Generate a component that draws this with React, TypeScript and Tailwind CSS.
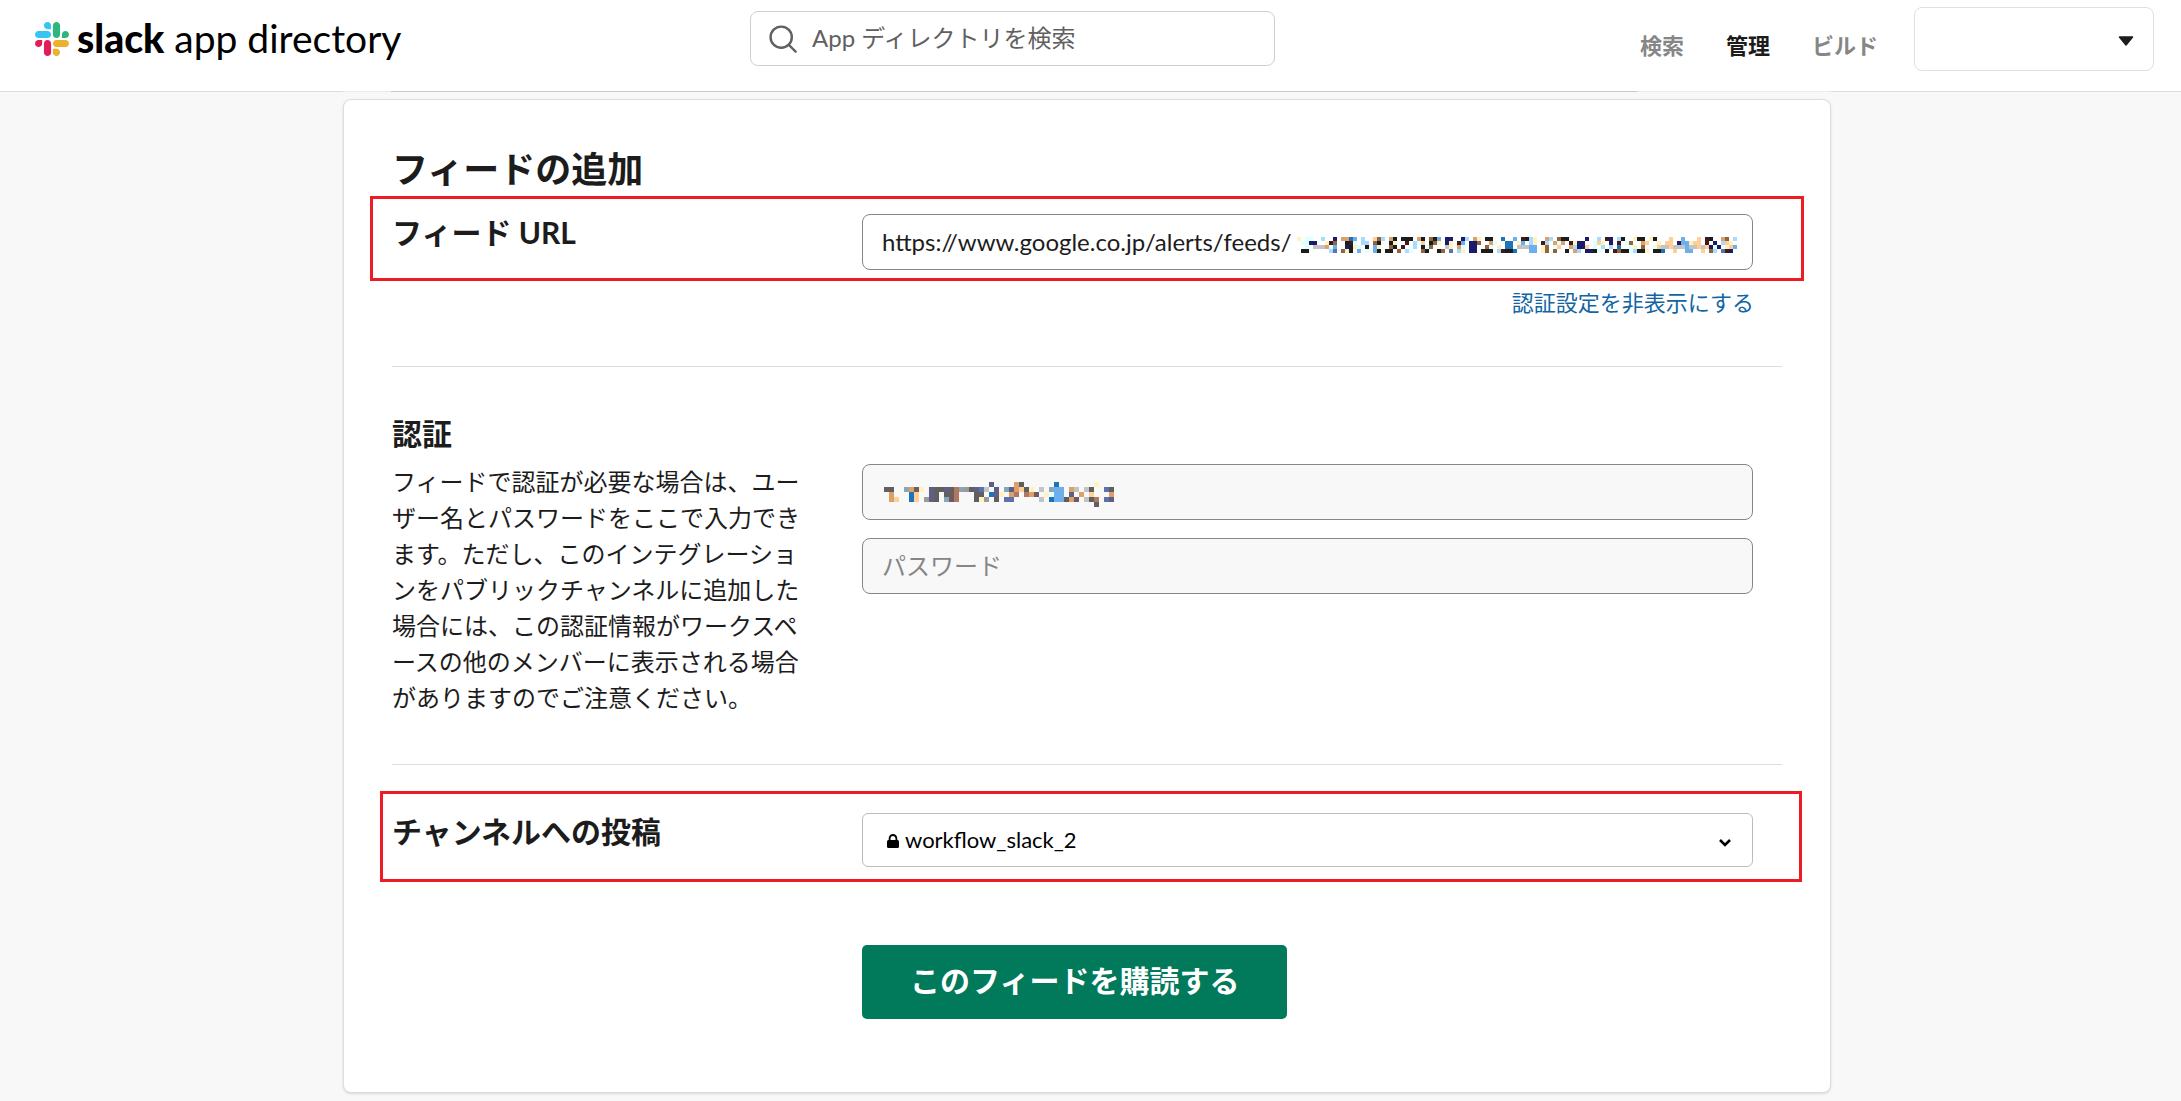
import { InputHTMLAttributes, ReactNode } from "react";

const PALETTE: Record<string, string> = {
  k: "#1c1c1c",
  d: "#5f5f5f",
  n: "#1b1b6a",
  b: "#1d72b8",
  s: "#6bb0ec",
  l: "#a5dcff",
  c: "#e0ffff",
  y: "#fff2c0",
  o: "#dca06a",
  t: "#ffcf96",
  p: "#8f6540",
  r: "#b07860",
  m: "#43191c",
  e: "#6b5c60",
  g: "#c4c4c4",
  h: "#9a9a9a",
  u: "#5b73a8",
  v: "#5f5f85",
  a: "#88a6b8",
};

const FEED_ID_CELLS = [
  "y.cc..l..n.oobs.l..tpl.ok.kkk.ok.pks.nn..nl.oy.kk..b..s.mkly..ol.pkk....n..l.mn.lk..ykk.yk...t..s...t.mk..op.l",
  ".ccnn..ymp..kmc.ll.pk..ky..m.lct.kpy.ny.ms.nnp..oc..bb.ys.ly.ml.oco.mynn..cty.n.m.cp..ot..y.tt.nssytt.m.n.lty.",
  "..c.gggocs..nkyc.k.sy..pk.m..l.kcp...gy.oc.nn..pc.y.bb.gggss.yp.ct..olnnt.c.l.l.b..cy.p..ctggtgggsggtgtncn.yts",
  ".kk.....lu.pyk.s.c.sk.kk.p.lc..pk..kp.u.ly.nn.kkk.lmkkb...ss.yp.p..k.ol.nnkc.k.mpkkclkky.kkb..t..ss..t.pl.umn.",
];

const USERNAME_CELLS = [
  ".....................v....od......b.......y...",
  "ed..aoey.vddverahdvug.v.avotdy.g.ass.og.gd..ud",
  ".o...bt..vd.der...dd.bvy.or.roe.ycss.v.o.t...o",
  ".ot..bt.hvd.aer...dyh.d.uu.....g.bssdoe.gdr.uv",
  "..........................................d...",
];

// Pixelated strip that hides a private value
function Mosaic({ rows, cell, className = "" }: { rows: string[]; cell: number; className?: string }) {
  return (
    <svg
      aria-hidden="true"
      width={rows[0].length * cell}
      height={rows.length * cell}
      shapeRendering="crispEdges"
      className={`pointer-events-none absolute ${className}`}
    >
      {rows.map((row, y) =>
        row.split("").map((key, x) =>
          key === "." ? null : (
            <rect key={`${x}-${y}`} x={x * cell} y={y * cell} width={cell} height={cell} fill={PALETTE[key]} />
          ),
        ),
      )}
    </svg>
  );
}

function SlackMark() {
  return (
    <svg viewBox="0 0 122.8 122.8" className="size-[34px] shrink-0" aria-hidden="true">
      <path
        fill="#E01E5A"
        d="M25.8 77.6c0 7.1-5.8 12.9-12.9 12.9S0 84.7 0 77.6s5.8-12.9 12.9-12.9h12.9v12.9zm6.5 0c0-7.1 5.8-12.9 12.9-12.9s12.9 5.8 12.9 12.9v32.3c0 7.1-5.8 12.9-12.9 12.9s-12.9-5.8-12.9-12.9V77.6z"
      />
      <path
        fill="#36C5F0"
        d="M45.2 25.8c-7.1 0-12.9-5.8-12.9-12.9S38.1 0 45.2 0s12.9 5.8 12.9 12.9v12.9H45.2zm0 6.5c7.1 0 12.9 5.8 12.9 12.9s-5.8 12.9-12.9 12.9H12.9C5.8 58.1 0 52.3 0 45.2s5.8-12.9 12.9-12.9h32.3z"
      />
      <path
        fill="#2EB67D"
        d="M97 45.2c0-7.1 5.8-12.9 12.9-12.9s12.9 5.8 12.9 12.9-5.8 12.9-12.9 12.9H97V45.2zm-6.5 0c0 7.1-5.8 12.9-12.9 12.9s-12.9-5.8-12.9-12.9V12.9C64.7 5.8 70.5 0 77.6 0s12.9 5.8 12.9 12.9v32.3z"
      />
      <path
        fill="#ECB22E"
        d="M77.6 97c7.1 0 12.9 5.8 12.9 12.9s-5.8 12.9-12.9 12.9-12.9-5.8-12.9-12.9V97h12.9zm0-6.5c-7.1 0-12.9-5.8-12.9-12.9s5.8-12.9 12.9-12.9h32.3c7.1 0 12.9 5.8 12.9 12.9s-5.8 12.9-12.9 12.9H77.6z"
      />
    </svg>
  );
}

function Header() {
  return (
    <header className="grid h-[91px] grid-cols-[715fr_525fr_879fr] items-start bg-white pr-[27px] pl-[35px]">
      <a href="#" className="mt-[22px] flex items-start gap-2 text-[39px] leading-8 text-black">
        <SlackMark />
        <span>
          <span className="font-black">slack</span> app directory
        </span>
      </a>

      <div className="relative mt-[11px]">
        <input
          type="search"
          aria-label="App ディレクトリを検索"
          placeholder="App ディレクトリを検索"
          className="h-[55px] w-full rounded-lg border border-[#cfcfcf] bg-white pr-4 pb-0.5 pl-[61px] text-2xl outline-none placeholder:text-[#616061]"
        />
        <svg
          viewBox="0 0 28 28"
          fill="none"
          stroke="#616061"
          strokeWidth="2.4"
          strokeLinecap="round"
          className="pointer-events-none absolute top-[14px] left-[19px] size-7"
          aria-hidden="true"
        >
          <circle cx="12.2" cy="12.2" r="10.6" />
          <path d="M20 20l6.6 6.6" />
        </svg>
      </div>

      <div className="flex items-start justify-end">
        <nav className="mt-[30px] mr-9 flex gap-[42px] text-[22px] leading-8 font-bold text-[#868686]">
          <a href="#">検索</a>
          <a href="#" className="text-[#1d1c1d]">
            管理
          </a>
          <a href="#">ビルド</a>
        </nav>
        <div className="relative mt-[7px]">
          <select
            aria-label="ワークスペース"
            className="h-16 w-[240px] appearance-none rounded-lg border border-[#e0e0e0] bg-white outline-none"
          />
          <svg
            viewBox="0 0 16 10"
            className="pointer-events-none absolute top-[29px] right-5 h-[10px] w-4"
            aria-hidden="true"
          >
            <path
              d="M1.5 1h13L8 9z"
              fill="#1d1c1d"
              stroke="#1d1c1d"
              strokeWidth="1.5"
              strokeLinejoin="round"
            />
          </svg>
        </div>
      </div>
    </header>
  );
}

function FieldLabel({ htmlFor, children }: { htmlFor: string; children: ReactNode }) {
  return (
    <label htmlFor={htmlFor} className="text-[30px] leading-9 font-bold">
      {children}
    </label>
  );
}

function TextInput({ className = "", ...props }: InputHTMLAttributes<HTMLInputElement>) {
  return (
    <input
      className={`h-14 w-full rounded-lg border border-[#868686] px-[19px] pb-0.5 text-2xl outline-none placeholder:text-[#868686] ${className}`}
      {...props}
    />
  );
}

function FeedForm() {
  return (
    <form className="rounded-lg border border-[#ddd] bg-white px-12 pt-11 pb-[73px] shadow-sm">
      <h2 className="text-4xl leading-[50px] font-bold">フィードの追加</h2>

      <div className="mt-0.5 -mr-[22px] -ml-[22px] grid grid-cols-[470px_1fr] border-[3px] border-[#ed1c24] pt-[15px] pr-12 pb-2 pl-[19px]">
        <FieldLabel htmlFor="feed-url">フィード URL</FieldLabel>
        <div className="relative">
          <TextInput id="feed-url" type="text" defaultValue="https://www.google.co.jp/alerts/feeds/" />
          <Mosaic rows={FEED_ID_CELLS} cell={4} className="top-[23px] right-4" />
        </div>
      </div>

      <div className="mt-1.5 pr-7 text-right text-[22px] leading-8">
        <a href="#" className="text-[#1264a3]">
          認証設定を非表示にする
        </a>
      </div>

      <section className="mt-[47px] grid grid-cols-[470px_1fr] border-y border-[#ddd] py-12">
        <div className="pr-[60px]">
          <h3 className="text-[30px] leading-9 font-bold">認証</h3>
          <p className="mt-[13px] text-2xl leading-9 break-all">
            フィードで認証が必要な場合は、ユーザー名とパスワードをここで入力できます。ただし、このインテグレーションをパブリックチャンネルに追加した場合には、この認証情報がワークスペースの他のメンバーに表示される場合がありますのでご注意ください。
          </p>
        </div>
        <div className="mt-[49px] flex flex-col gap-[18px] pr-[29px]">
          <div className="relative">
            <TextInput type="text" aria-label="ユーザー名" className="bg-[#f8f8f8]" />
            <Mosaic rows={USERNAME_CELLS} cell={5} className="top-[18px] left-[22px]" />
          </div>
          <TextInput type="password" aria-label="パスワード" placeholder="パスワード" className="bg-[#f8f8f8]" />
        </div>
      </section>

      <div className="mt-[26px] -mr-5 -ml-3 grid grid-cols-[470px_1fr] border-[3px] border-[#ed1c24] pt-[19px] pr-[46px] pb-3 pl-[9px]">
        <FieldLabel htmlFor="channel">チャンネルへの投稿</FieldLabel>
        <div className="relative">
          <select
            id="channel"
            className="h-[54px] w-full appearance-none rounded-md border border-[#bbb] bg-white pb-0.5 pl-[42px] text-[22px] text-black outline-none"
          >
            <option>workflow_slack_2</option>
          </select>
          <svg
            viewBox="0 0 12 14"
            className="pointer-events-none absolute top-[21px] left-[25px] h-[14px] w-3"
            aria-hidden="true"
          >
            <rect y="6" width="12" height="8" rx="1.5" />
            <path d="M2.6 7V4.4a3.4 3.4 0 016.8 0V7" fill="none" stroke="#000" strokeWidth="1.8" />
          </svg>
          <svg
            viewBox="0 0 12 8"
            fill="none"
            stroke="#000"
            strokeWidth="2.6"
            className="pointer-events-none absolute top-[26px] right-[22px] h-2 w-3"
            aria-hidden="true"
          >
            <path d="M1 1l5 5 5-5" />
          </svg>
        </div>
      </div>

      <button
        type="submit"
        className="mt-[63px] ml-[470px] h-[74px] rounded-[5px] bg-[#007a5a] px-12 pb-1 text-[30px] leading-10 font-bold text-white"
      >
        このフィードを購読する
      </button>
    </form>
  );
}

export default function App() {
  return (
    <div
      lang="ja"
      className="min-h-screen bg-[#f8f8f8] font-[Lato,'Noto_Sans_CJK_JP',sans-serif] text-[#1d1c1d]"
    >
      <Header />

      {/* Bottom edge of the card that has scrolled under the header */}
      <div className="h-px bg-[#ddd] pr-[7px]">
        <div className="mx-auto max-w-[1488px] bg-[#ebebeb] pr-[194px] pl-12">
          <div className="h-px bg-[#c8c8c8]" />
        </div>
      </div>

      <main className="pt-[7px] pr-[7px] pb-2">
        <div className="mx-auto max-w-[1488px]">
          <FeedForm />
        </div>
      </main>
    </div>
  );
}
